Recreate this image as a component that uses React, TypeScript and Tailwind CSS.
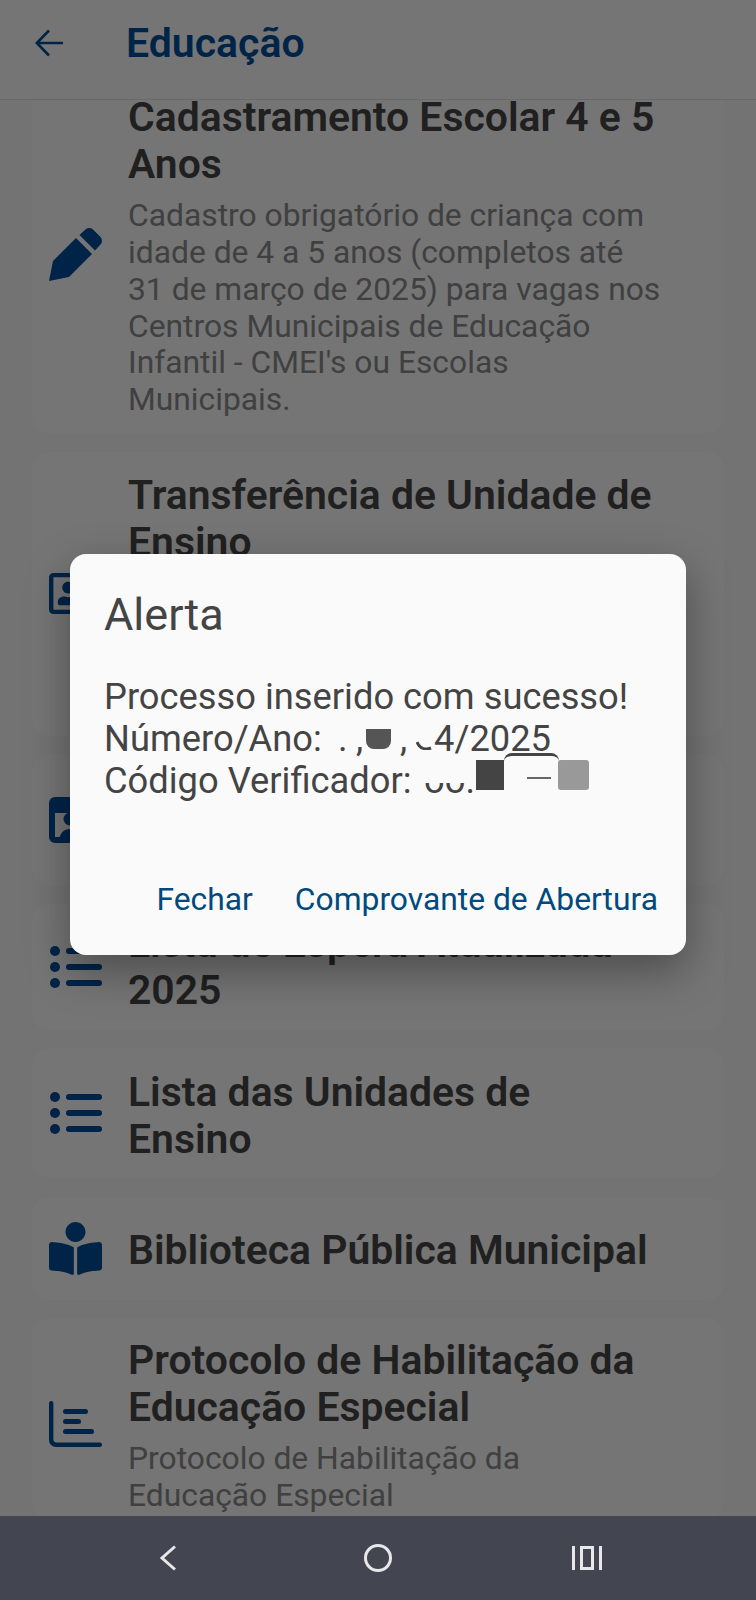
import React from 'react';
import { FaBookReader, FaRegAddressCard } from 'react-icons/fa';

const iconClass = 'w-[53px] h-[53px] shrink-0 text-[#002448]';

function Card({ className, icon, title, desc }: { className: string; icon: React.ReactNode; title?: string[]; desc?: string[] }) {
  return (
    <div className={`flex items-center gap-[26px] mx-[32px] pl-[17px] pr-[10px] bg-[#757575] rounded-[16px] ${className}`}>
      <div className="w-[53px] shrink-0 flex items-center justify-center">{icon}</div>
      <div className="flex-1 min-w-0">
        {title?.map((t) => (
          <div key={t} className="text-[40.9px] leading-[47px] font-semibold text-[#202020] whitespace-nowrap">{t}</div>
        ))}
        {desc && (
          <div className="mt-[9px]">
            {desc.map((d) => (
              <div key={d} className="text-[31.8px] leading-[36.7px] text-[#404040] whitespace-nowrap">{d}</div>
            ))}
          </div>
        )}
      </div>
    </div>
  );
}

function PencilIcon() {
  return (
    <svg viewBox="0 0 53 53" className="w-[53px] h-[53px] -mt-[3px] text-[#002448]" fill="currentColor">
      <path d="M0 53 4 33 27 10 43 26 20 49z" />
      <path d="M30.500 7 36.500 1.500a5.500 5.500 0 0 1 7.500 0l7.500 7.500a5.500 5.500 0 0 1 0 7.500L46 22.500z" />
    </svg>
  );
}

function ListIcon() {
  return (
    <svg viewBox="0 0 52 42" className="w-[52px] h-[42px] text-[#002448]" fill="currentColor">
      <circle cx="5" cy="5" r="5" />
      <circle cx="5" cy="21" r="5" />
      <circle cx="5" cy="37" r="5" />
      <rect x="16" y="2" width="36" height="6" rx="3" />
      <rect x="16" y="18" width="36" height="6" rx="3" />
      <rect x="16" y="34" width="36" height="6" rx="3" />
    </svg>
  );
}

function ChartIcon() {
  return (
    <svg viewBox="0 0 53 46" className="w-[53px] h-[46px] text-[#002448]" fill="currentColor">
      <path d="M0 2.200a2.200 2.200 0 0 1 4.400 0V38a3.500 3.500 0 0 0 3.500 3.500h42.900a2.200 2.200 0 0 1 0 4.500H7a7 7 0 0 1-7-7z" />
      <rect x="14" y="8" width="25" height="5" rx="2.500" />
      <rect x="14" y="18" width="18" height="5" rx="2.500" />
      <rect x="14" y="28" width="31" height="5" rx="2.500" />
    </svg>
  );
}

function WindowPersonIcon() {
  return (
    <svg viewBox="0 0 53 46" className="w-[53px] h-[46px] text-[#002448]" fill="currentColor">
      <path fillRule="evenodd" d="M6 0h41a6 6 0 0 1 6 6v34a6 6 0 0 1-6 6H6a6 6 0 0 1-6-6V6a6 6 0 0 1 6-6zM6 16v24h41V16z" />
      <circle cx="21" cy="22" r="6.500" />
      <path d="M10 46c0-10 5-14 11-14s11 4 11 14z" />
    </svg>
  );
}

export default function App() {
  return (
    <div className="relative w-[756px] h-[1600px] overflow-hidden bg-[#737373] font-['Roboto',sans-serif]">
      {/* barra superior */}
      <div className="relative z-10 h-[100px] flex items-center bg-[#757575] border-b border-[#6a6a6a]">
        <svg viewBox="0 0 28 28" className="ml-[35px] -mt-[14px] w-[28px] h-[28px] text-[#002448]" fill="none" stroke="currentColor" strokeWidth="2.600">
          <path d="M28 14H2M14 1.500 1.800 14 14 26.500" />
        </svg>
        <div className="ml-[63px] -mt-[13px] text-[41px] font-semibold text-[#002448] leading-none">Educação</div>
      </div>

      {/* lista rolada */}
      <div className="-mt-[21px] flex flex-col">
        <Card
          className="h-[354px]"
          icon={<PencilIcon />}
          title={['Cadastramento Escolar 4 e 5', 'Anos']}
          desc={['Cadastro obrigatório de criança com', 'idade de 4 a 5 anos (completos até', '31 de março de 2025) para vagas nos', 'Centros Municipais de Educação', "Infantil - CMEI's ou Escolas", 'Municipais.']}
        />
        <Card
          className="mt-[19px] h-[284px] !items-start pt-[20px]"
          icon={<FaRegAddressCard className="w-[53px] h-[53px] shrink-0 text-[#002448] mt-[95px]" />}
          title={['Transferência de Unidade de', 'Ensino']}
        />
        <Card className="mt-[19px] h-[130px]" icon={<WindowPersonIcon />} />
        <Card
          className="mt-[19px] h-[126px]"
          icon={<ListIcon />}
          title={['Lista de Espera Atualizada', '2025']}
        />
        <Card
          className="mt-[18px] h-[130px] pt-[6px]"
          icon={<div className="mb-[6px]"><ListIcon /></div>}
          title={['Lista das Unidades de', 'Ensino']}
        />
        <Card
          className="mt-[19px] h-[103px] pt-[4px]"
          icon={<div className="mb-[4px]"><FaBookReader className={iconClass} /></div>}
          title={['Biblioteca Pública Municipal']}
        />
        <Card
          className="mt-[18px] h-[200px] !items-start pt-[19px]"
          icon={<div className="mt-[64px]"><ChartIcon /></div>}
          title={['Protocolo de Habilitação da', 'Educação Especial']}
          desc={['Protocolo de Habilitação da', 'Educação Especial']}
        />
      </div>

      {/* diálogo */}
      <div className="absolute left-[70px] top-[554px] w-[616px] h-[401px] bg-[#fafafa] rounded-[16px] shadow-[0_16px_44px_rgba(0,0,0,0.35)] z-20 pl-[34px] pr-[28px] flex flex-col">
        <div className="mt-[36px] text-[45px] leading-[50px] text-[#444444]">Alerta</div>
        <div className="mt-[36px] text-[36.3px] leading-[42px] text-[#444444] whitespace-nowrap">
          <div>Processo inserido com sucesso!</div>
          <div className="relative">
            Número/Ano:
            <span className="absolute left-[234px] top-0">.</span>
            <span className="absolute left-[252px] top-0">,</span>
            <span className="absolute left-[296px] top-0">,</span>
            <svg viewBox="0 0 22 12" className="absolute left-[312px] top-[20px] w-[22px] h-[12px]" fill="none" stroke="#444444" strokeWidth="3">
              <path d="M1 4c3 7 9 8 14 6" />
            </svg>
            <span className="absolute left-[330px] top-0">4/2025</span>
            <div className="absolute left-[262px] top-[11px] w-[25px] h-[20px] rounded-b-[8px] bg-[#555555]" />
          </div>
          <div className="relative">
            Código Verificador:
            <span className="absolute left-[320px] top-0">oo.</span>
            <div className="absolute left-[316px] top-[4px] w-[56px] h-[19px] bg-[#fafafa]" />
            <div className="absolute left-[372px] top-0 w-[28px] h-[30px] bg-[#444444]" />
            <div className="absolute left-[400px] -top-[7px] w-[55px] h-[8px] border-t-[3px] border-[#444444] rounded-t-[12px]" />
            <div className="absolute left-[454px] top-0 w-[31px] h-[30px] rounded-[3px] bg-[#999999]" />
            <div className="absolute left-[423px] top-[17px] w-[24px] h-[2px] bg-[#666666]" />
          </div>
        </div>
        <div className="mt-auto mb-[38px] flex justify-end gap-[42px] text-[31.8px] leading-[36px] text-[#004a80]">
          <span>Fechar</span>
          <span>Comprovante de Abertura</span>
        </div>
      </div>

      {/* navegação do sistema */}
      <div className="absolute left-0 right-0 bottom-0 h-[84px] bg-[#434651] z-10">
        <div className="relative w-full h-full flex items-center">
          <svg viewBox="0 0 18 26" className="absolute left-[159px] top-[29px] w-[18px] h-[26px]" fill="none" stroke="#e8e8ea" strokeWidth="3">
            <path d="M16 1.500 3 13l13 11.500" />
          </svg>
          <div className="absolute left-[364px] top-[28px] w-[28px] h-[28px] rounded-full border-[3px] border-[#e8e8ea]" />
          <svg viewBox="0 0 30 26" className="absolute left-[572px] top-[29px] w-[30px] h-[26px]" fill="none" stroke="#e8e8ea" strokeWidth="3">
            <path d="M1.500 1v24M28.500 1v24" />
            <rect x="9.500" y="2.500" width="11" height="21" />
          </svg>
        </div>
      </div>
    </div>
  );
}
